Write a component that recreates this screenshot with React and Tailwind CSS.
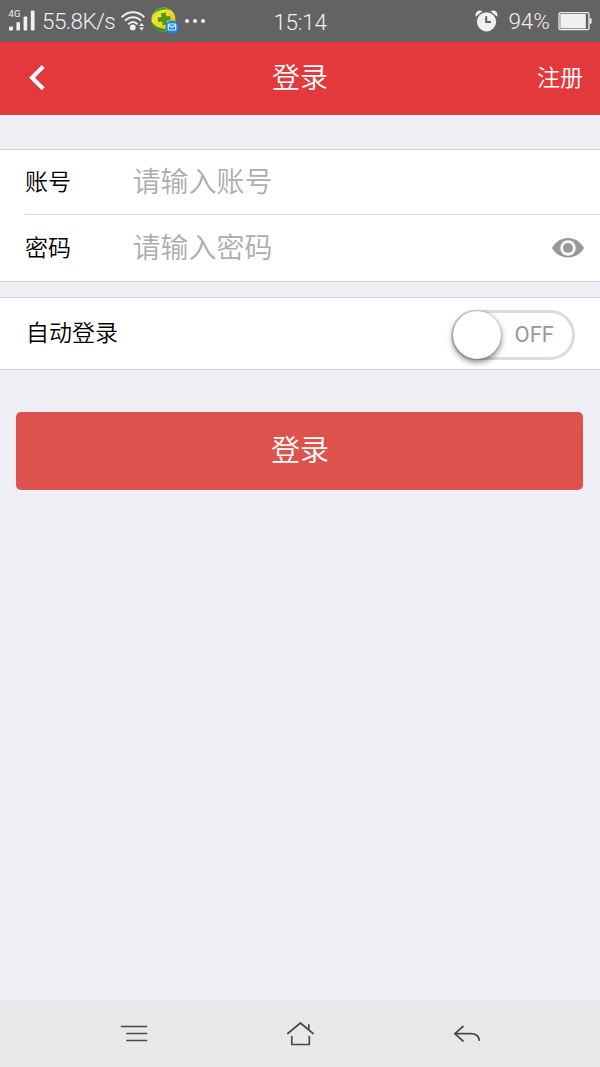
function SignalIcon() {
  return (
    <div className="relative h-6 w-[27px]">
      <span className="absolute left-[0.5px] top-0 text-[9.5px] leading-[10px] tracking-[0.2px]">
        4G
      </span>
      <svg className="h-6 w-[27px]" viewBox="0 0 27 24" fill="currentColor">
        <rect x="1" y="17.600" width="4" height="4" rx="0.8" />
        <rect x="8.400" y="13.200" width="3.600" height="8.400" rx="0.8" />
        <rect x="15.600" y="7.600" width="3.600" height="14" rx="0.8" />
        <rect x="22.800" y="1.600" width="3.800" height="20" rx="0.8" />
      </svg>
    </div>
  );
}

function WifiIcon() {
  return (
    <svg className="h-5 w-6" viewBox="0 0 24 20">
      <g fill="none" stroke="currentColor" strokeWidth="2">
        <path d="M0.7 6.200C7-0.400 17-0.400 23.300 6.200" />
        <path d="M4 9.800C8.500 5 15.500 5 20 9.800" />
        <path d="M7.200 13.200C10 10.200 13.800 10.200 16.600 13.200" />
      </g>
      <circle cx="11.800" cy="16.400" r="2.900" fill="currentColor" />
      <path d="M20.600 12.100l2.500 3h-5zM20.600 19.500l2.500-3h-5z" fill="currentColor" />
    </svg>
  );
}

function SecurityIcon() {
  return (
    <svg className="h-7 w-7" viewBox="0 0 28 28">
      <defs>
        <linearGradient id="ball" x1="0" y1="0" x2="1" y2="1">
          <stop offset="0" stopColor="#9cc528" />
          <stop offset="0.3" stopColor="#f3e436" />
          <stop offset="0.7" stopColor="#efc81c" />
          <stop offset="1" stopColor="#2f9626" />
        </linearGradient>
      </defs>
      <circle cx="12.500" cy="12.500" r="12" fill="url(#ball)" />
      <path d="M2 7C6 0 15-1 20.500 3.500 14 1.500 7 3 2 7z" fill="#3f9b2b" />
      <path d="M0.800 14.500c3 5 8 7.500 14.500 7.300l-1 2.600C7 25 1.500 21 0.800 14.500z" fill="#2f9626" />
      <path
        d="M10 6.200l4.800-0.700 0.500 3.700 3.800-0.500 0.600 4.600-3.800 0.500 0.500 3.700-4.800 0.700-0.500-3.700-4 0.500-0.600-4.600 4-0.500z"
        fill="#4c9a1d"
      />
      <circle cx="21" cy="20" r="6.500" fill="#1685f0" />
      <rect x="17.300" y="17" width="7.400" height="6" rx="0.700" fill="none" stroke="#e4f1ff" strokeWidth="1.200" />
      <path d="M17.900 18.300l3.100 2.300 3.100-2.300" fill="none" stroke="#e4f1ff" strokeWidth="1.200" />
    </svg>
  );
}

function AlarmIcon() {
  return (
    <svg className="h-[22px] w-[23px]" viewBox="0 0 23 22">
      <g fill="currentColor">
        <circle cx="11.500" cy="11.800" r="9.600" />
        <path d="M0.800 6.800C-0.700 2.500 3.800-1.300 7.400 1.300z" />
        <path d="M22.200 6.800C23.700 2.500 19.200-1.300 15.600 1.300z" />
      </g>
      <path d="M11.200 6.200v5.900h4.800" fill="none" stroke="#636363" strokeWidth="2" />
    </svg>
  );
}

function BatteryIcon() {
  return (
    <svg className="h-5 w-[34px]" viewBox="0 0 34 20">
      <rect x="1" y="1.700" width="30" height="17" rx="1.500" fill="none" stroke="currentColor" strokeWidth="1.300" />
      <rect x="2.300" y="3" width="25.500" height="14.400" fill="currentColor" />
      <rect x="31.600" y="7.300" width="2" height="5.400" rx="0.700" fill="currentColor" />
    </svg>
  );
}

function EyeIcon() {
  return (
    <svg className="h-5 w-8" viewBox="0 0 32 20">
      <path d="M0 10C3.500 3.500 9.500 0 16 0s12.500 3.500 16 10c-3.500 6.300-9.500 9.500-16 9.500S3.500 16.300 0 10z" fill="#999" />
      <circle cx="16" cy="10" r="6.400" fill="#999" stroke="#fff" strokeWidth="2.600" />
    </svg>
  );
}

function StatusBar() {
  return (
    <div className="flex h-[41.5px] items-center bg-[#636363] px-2 text-[#f0f0f0] font-['Roboto',sans-serif]">
      <div className="flex flex-1 items-center">
        <SignalIcon />
        <span className="ml-[7px] w-[79px] whitespace-nowrap pt-[3px] text-[22.500px] font-light tracking-[-0.6px]">
          55.8K/s
        </span>
        <WifiIcon />
        <span className="ml-[6px] pt-px">
          <SecurityIcon />
        </span>
        <div className="ml-[6px] flex gap-1">
          <i className="h-1 w-1 rounded-full bg-[#f0f0f0]" />
          <i className="h-1 w-1 rounded-full bg-[#f0f0f0]" />
          <i className="h-1 w-1 rounded-full bg-[#f0f0f0]" />
        </div>
      </div>
      <span className="pt-[5px] text-[22.500px] font-light tracking-[-0.3px]">15:14</span>
      <div className="flex flex-1 items-center justify-end">
        <AlarmIcon />
        <span className="ml-[10px] mr-[8px] pt-[3px] text-[22.500px] font-light">94%</span>
        <BatteryIcon />
      </div>
    </div>
  );
}

function Header() {
  return (
    <header className="grid h-[73.5px] grid-cols-3 items-center bg-[#e3393c] text-white">
      <button className="pl-[29px]">
        <svg className="h-[26px] w-4" viewBox="0 0 16 26" fill="none" stroke="currentColor" strokeWidth="4">
          <path d="M14.200 1.500L3 12.800l11.200 11" />
        </svg>
      </button>
      <h1 className="pb-1 text-center text-[28px] font-[350]">登录</h1>
      <a className="pb-1 pr-[17px] text-right text-[23px] font-[350]">注册</a>
    </header>
  );
}

function Field({ label, placeholder, children }) {
  return (
    <label className="flex h-full items-center pr-4">
      <span className="w-[107.5px] pb-1 text-[23px] font-[350]">{label}</span>
      <span className="flex-1 pb-1 text-[28px] font-[350] text-[#adadad]">{placeholder}</span>
      {children}
    </label>
  );
}

function Toggle() {
  return (
    <div className="mr-[25px] mt-[2px] flex h-[50px] w-[124px] items-center rounded-full border-[3px] border-[#dcdcdc] bg-white">
      <span className="-ml-[1.5px] h-12 w-12 shrink-0 rounded-full bg-white shadow-[0_3px_6px_rgba(0,0,0,0.5),0_0_2px_rgba(0,0,0,0.3)]" />
      <span className="ml-[14px] text-[22px] text-[#999] font-['Roboto',sans-serif]">OFF</span>
    </div>
  );
}

function NavBar() {
  return (
    <nav className="flex h-[67px] items-center justify-between bg-[#e8e8e8] px-[119px] text-[#4a4a4a]">
      <svg className="h-7 w-[30px]" viewBox="0 0 30 28" fill="none" stroke="currentColor" strokeWidth="1.700" strokeLinecap="round">
        <path d="M2.500 6.500h25M8 13.500h19.500M8 20.500h19.500" />
      </svg>
      <svg className="h-7 w-[30px]" viewBox="0 0 30 28" fill="none" stroke="currentColor" strokeWidth="1.700" strokeLinecap="round" strokeLinejoin="round">
        <path d="M2.800 13.500L15.400 3l12.700 10.500M23.800 4.800v4.700M6.800 16.500v8h17.500v-8" />
      </svg>
      <svg className="h-7 w-[30px]" viewBox="0 0 30 28" fill="none" stroke="currentColor" strokeWidth="1.700" strokeLinecap="round" strokeLinejoin="round">
        <path d="M12 6.500L3.800 13.700l8.200 7.300M3.800 13.700H19.500c5 0 8.300 2.500 8.800 6.500" />
      </svg>
    </nav>
  );
}

export default function App() {
  return (
    <div className="flex h-[1067px] w-[600px] flex-col overflow-hidden bg-[#efeef4] text-black font-['Noto_Sans_CJK_SC',sans-serif]">
      <StatusBar />
      <Header />
      <main className="flex-1">
        <section className="mt-[34px] border-y border-[#d3d3d5] bg-white pl-[25px]">
          <div className="h-[65px] border-b border-[#d9d9d9]">
            <Field label="账号" placeholder="请输入账号" />
          </div>
          <div className="h-[66px]">
            <Field label="密码" placeholder="请输入密码">
              <EyeIcon />
            </Field>
          </div>
        </section>
        <section className="mt-[15px] flex h-[73px] items-center justify-between border-y border-[#d3d3d5] bg-white pl-[26px]">
          <span className="pb-1 text-[23px] font-[350]">自动登录</span>
          <Toggle />
        </section>
        <button className="ml-[16.4px] mt-[42px] block h-[78px] w-[567px] rounded-[5px] bg-[#dd524d] pb-1 text-[29px] font-[350] text-white">
          登录
        </button>
      </main>
      <NavBar />
    </div>
  );
}
